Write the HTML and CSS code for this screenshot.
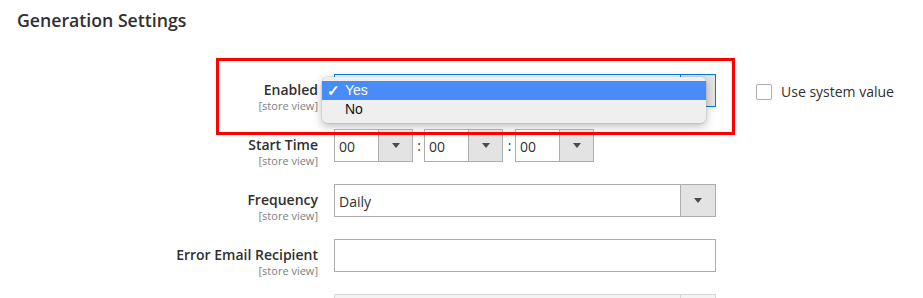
FILE: index.html
```html
<!DOCTYPE html>
<html>
<head>
<meta charset="utf-8">
<link rel="stylesheet" href="styles.css">
</head>
<body>
<div class="page">
  <h2 class="title">Generation Settings</h2>
  <div class="form">
    <div class="row">
      <div class="label"><span class="name">Enabled</span><span class="scope">[store view]</span></div>
      <div class="control">
        <div class="select focused"><span class="value"></span><span class="arrow"><i class="tri"></i></span></div>
        <div class="menu">
          <div class="opt sel"><span class="check">✓</span>Yes</div>
          <div class="opt"><span class="check"></span>No</div>
        </div>
      </div>
      <label class="sys"><span class="box"></span>Use system value</label>
    </div>
    <div class="row">
      <div class="label"><span class="name">Start Time</span><span class="scope">[store view]</span></div>
      <div class="control time">
        <div class="select small"><span class="value">00</span><span class="arrow"><i class="tri"></i></span></div>
        <span class="colon">:</span>
        <div class="select small"><span class="value">00</span><span class="arrow"><i class="tri"></i></span></div>
        <span class="colon wide">:</span>
        <div class="select small"><span class="value">00</span><span class="arrow"><i class="tri"></i></span></div>
      </div>
    </div>
    <div class="row">
      <div class="label"><span class="name">Frequency</span><span class="scope">[store view]</span></div>
      <div class="control">
        <div class="select"><span class="value">Daily</span><span class="arrow"><i class="tri"></i></span></div>
      </div>
    </div>
    <div class="row">
      <div class="label"><span class="name">Error Email Recipient</span><span class="scope">[store view]</span></div>
      <div class="control">
        <div class="input"></div>
      </div>
    </div>
    <div class="row">
      <div class="label"></div>
      <div class="control">
        <div class="select disabled"><span class="value"></span><span class="arrow"></span></div>
      </div>
    </div>
  </div>
  <div class="highlight"></div>
</div>
</body>
</html>
```

FILE: styles.css
```css
* { box-sizing: border-box; }
html, body { margin: 0; padding: 0; background: #fff; }
body { font-family: "Open Sans", "Liberation Sans", sans-serif; color: #303030; overflow: hidden; }
.page { position: relative; width: 923px; height: 298px; overflow: hidden; }
.title {
  margin: 0;
  padding: 10px 0 0 17px;
  font-size: 17.7px;
  line-height: 21.6px;
  font-weight: 600;
  color: #303030;
}
.form { display: flex; flex-direction: column; gap: 17px; padding-top: 42.4px; }
.row { display: flex; align-items: flex-start; }
.label {
  width: 334px;
  flex: none;
  padding: 7px 16px 0 0;
  text-align: right;
  display: flex;
  flex-direction: column;
  align-items: flex-end;
}
.name { font-size: 14px; line-height: 18px; font-weight: 600; color: #303030; white-space: nowrap; }
.scope { font-size: 11px; line-height: 13px; color: #808080; }
.control { position: relative; width: 382px; flex: none; display: flex; align-items: center; }
.select {
  width: 382px;
  height: 33px;
  border: 1px solid #adadad;
  background: #fff;
  display: flex;
  font-size: 14px;
  line-height: 31px;
  color: #303030;
}
.select .value { flex: 1; padding: 1px 0 0 4px; }
.select .arrow {
  width: 35px;
  border-left: 1px solid #adadad;
  background: #e3e3e3;
  display: flex;
  align-items: center;
  justify-content: center;
}
.tri {
  display: block;
  width: 0; height: 0;
  border-left: 4px solid transparent;
  border-right: 4px solid transparent;
  border-top: 5px solid #514943;
}
.select.focused { border-color: #007bdb; }
.select.focused .arrow { border-left-color: #007bdb; }
.select.small { width: 79px; flex: none; }
.select.small .arrow { width: 34px; }
.colon { width: 11px; text-align: center; font-size: 14px; color: #303030; padding-left: 1px; }
.colon.wide { width: 12px; }
.input { width: 382px; height: 33px; border: 1px solid #adadad; background: #fff; }
.select.disabled { background: #f4f4f4; border-color: #d6d6d6; }
.select.disabled .arrow { background: #f4f4f4; border-left-color: #d6d6d6; }
.menu {
  position: absolute;
  left: -12px;
  top: 3px;
  width: 384px;
  padding: 4px 0;
  background: #efefef;
  border-radius: 5px;
  box-shadow: 0 3px 10px rgba(0,0,0,0.28), 0 0 0 0.5px rgba(0,0,0,0.12);
  font-family: "Liberation Sans", Arial, sans-serif;
  font-size: 14px;
  color: #111;
}
.opt { height: 19px; line-height: 19px; display: flex; }
.opt .check { width: 23px; padding-left: 5px; font-size: 15px; font-weight: 700; }
.opt.sel { background: #4a8cf7; color: #fff; }
.sys {
  margin-left: 40px;
  padding-top: 10px;
  display: flex;
  align-items: center;
  font-size: 14px;
  line-height: 16px;
  color: #303030;
  white-space: nowrap;
}
.box {
  width: 16px; height: 16px;
  border: 1px solid #adadad;
  border-radius: 2px;
  background: #fff;
  margin-right: 9px;
}
.highlight {
  position: absolute;
  left: 216px;
  top: 58px;
  width: 519px;
  height: 77px;
  border: 3px solid #ff0000;
  pointer-events: none;
}
```
